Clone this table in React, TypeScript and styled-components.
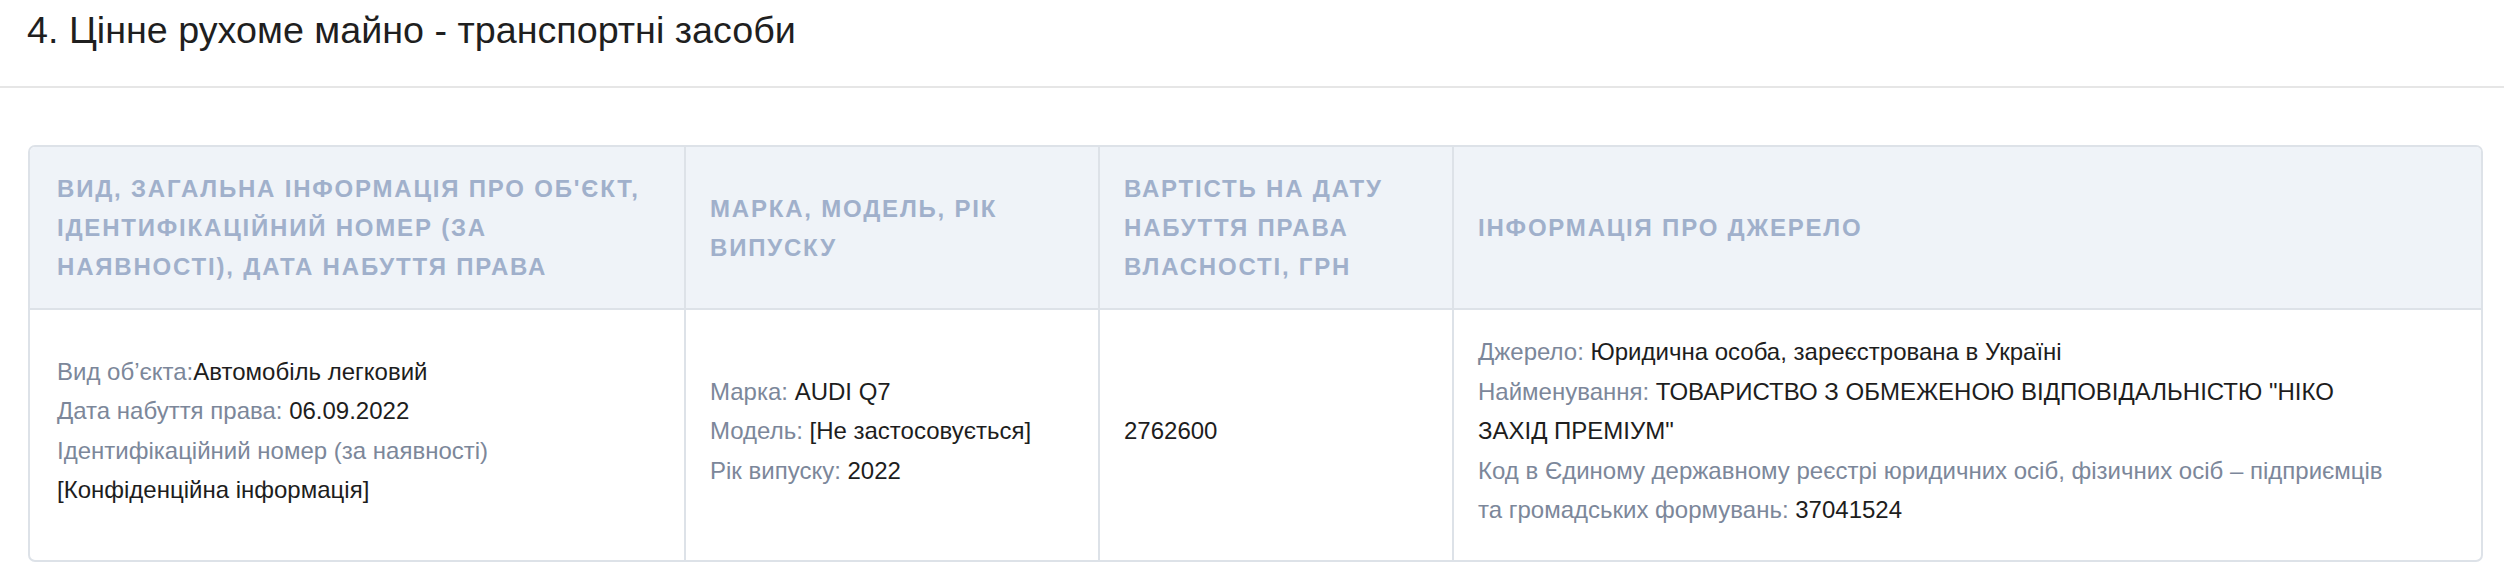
import React from 'react';
import styled, { createGlobalStyle } from 'styled-components';

const GlobalStyle = createGlobalStyle`
	body {
		margin: 0;
		background: #ffffff;
		font-family: "Liberation Sans", Arial, sans-serif;
		color: #1d1d1d;
	}
`

const StyledSection = styled.section`
	display: flex;
	flex-direction: column;
`

const StyledSectionTitle = styled.h2`
	margin: 0;
	padding: 8px 0 34px 27px;
	font-size: 37.7px;
	font-weight: 400;
	line-height: 44px;
	color: #1f1f1f;
	border-bottom: 2px solid #e6e6e6;
`

const StyledTable = styled.div`
	display: grid;
	grid-template-columns: 656px 414px 354px 1fr;
	margin: 57px 21px 0 28px;
	border: 2px solid #dde2e8;
	border-radius: 7px;
	overflow: hidden;
`

const StyledHeadCell = styled.div<{ $last?: boolean; $first?: boolean }>`
	display: flex;
	align-items: center;
	padding: 22px 24px 22px ${p => p.$first ? '27px' : '24px'};
	background: #eff3f8;
	border-bottom: 2px solid #dde2e8;
	border-right: ${p => p.$last ? 'none' : '2px solid #dde2e8'};
	font-size: 24px;
	font-weight: 700;
	line-height: 39px;
	letter-spacing: 1.8px;
	text-transform: uppercase;
	color: #a0b0cb;
`

const StyledBodyCell = styled.div<{ $last?: boolean; $first?: boolean }>`
	display: flex;
	flex-direction: column;
	justify-content: center;
	padding: 22px 24px 30px ${p => p.$first ? '27px' : '24px'};
	border-right: ${p => p.$last ? 'none' : '2px solid #dde2e8'};
	font-size: 24px;
	line-height: 39.5px;
`

const StyledLine = styled.div`
	white-space: nowrap;
`

const StyledLabel = styled.span`
	color: #7c879a;
`

const StyledValue = styled.span`
	color: #1d1d1d;
`

type Line = { label?: string; value?: React.ReactNode }

const columns = [
	'Вид, загальна інформація про об\'єкт, ідентифікаційний номер (за наявності), дата набуття права',
	'Марка, модель, рік випуску',
	'Вартість на дату набуття права власності, грн',
	'Інформація про джерело',
]

const row: Line[][] = [
	[
		{ label: 'Вид об’єкта:', value: 'Автомобіль легковий' },
		{ label: 'Дата набуття права: ', value: '06.09.2022' },
		{ label: 'Ідентифікаційний номер (за наявності)' },
		{ value: '[Конфіденційна інформація]' },
	],
	[
		{ label: 'Марка: ', value: 'AUDI Q7' },
		{ label: 'Модель: ', value: '[Не застосовується]' },
		{ label: 'Рік випуску: ', value: '2022' },
	],
	[
		{ value: '2762600' },
	],
	[
		{ label: 'Джерело: ', value: 'Юридична особа, зареєстрована в Україні' },
		{ label: 'Найменування: ', value: <>ТОВАРИСТВО З ОБМЕЖЕНОЮ ВІДПОВІДАЛЬНІСТЮ "НІКО<br />ЗАХІД ПРЕМІУМ"</> },
		{ label: 'Код в Єдиному державному реєстрі юридичних осіб, фізичних осіб – підприємців', value: null },
		{ label: 'та громадських формувань: ', value: '37041524' },
	],
]

const App = () => {
	return <>
		<GlobalStyle />
		<StyledSection>
			<StyledSectionTitle>4. Цінне рухоме майно - транспортні засоби</StyledSectionTitle>
			<StyledTable>
				{columns.map((title, i) =>
					<StyledHeadCell key={title} $first={i === 0} $last={i === columns.length - 1}>
						<div>{title}</div>
					</StyledHeadCell>
				)}
				{row.map((lines, i) =>
					<StyledBodyCell key={i} $first={i === 0} $last={i === row.length - 1}>
						{lines.map((line, j) =>
							<StyledLine key={j}>
								{line.label && <StyledLabel>{line.label}</StyledLabel>}
								{line.value && <StyledValue>{line.value}</StyledValue>}
							</StyledLine>
						)}
					</StyledBodyCell>
				)}
			</StyledTable>
		</StyledSection>
	</>
}

export default App;
